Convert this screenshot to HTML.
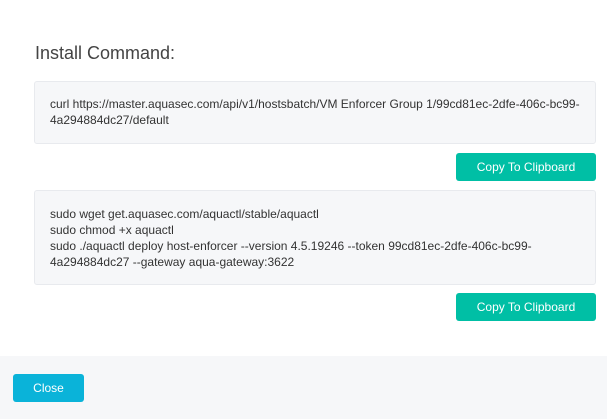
<!DOCTYPE html>
<html><head><style>
body{margin:0;width:607px;height:419px;background:#fff;font-family:"Liberation Sans",sans-serif;position:relative;overflow:hidden}
.t{position:absolute;left:35px;top:43px;font-size:18px;color:#444;}
.box{position:absolute;left:34px;width:560px;background:#f6f7f9;border:1px solid #e8eaee;border-radius:3px;}
.txt{position:absolute;left:50px;font-size:12px;line-height:16px;color:#333;white-space:nowrap}
.btn{position:absolute;left:456px;width:140px;height:28px;background:#00bfa5;border-radius:3px;color:#fff;font-size:12px;text-align:center;line-height:28px}
.foot{position:absolute;left:0;top:356px;width:607px;height:63px;background:#f6f7f9}
.close{position:absolute;left:13px;top:374px;width:71px;height:28px;background:#0ab3d9;border-radius:3px;color:#fff;font-size:12px;text-align:center;line-height:28px}
</style></head><body>
<div class="t">Install Command:</div>
<div class="box" style="top:81px;height:61px"></div>
<div class="txt" style="top:96px">curl https://master.aquasec.com/api/v1/hostsbatch/VM Enforcer Group 1/99cd81ec-2dfe-406c-bc99-<br>4a294884dc27/default</div>
<div class="btn" style="top:153px">Copy To Clipboard</div>
<div class="box" style="top:190px;height:93px"></div>
<div class="txt" style="top:206px">sudo wget get.aquasec.com/aquactl/stable/aquactl<br>sudo chmod +x aquactl<br>sudo ./aquactl deploy host-enforcer --version 4.5.19246 --token 99cd81ec-2dfe-406c-bc99-<br>4a294884dc27 --gateway aqua-gateway:3622</div>
<div class="btn" style="top:293px">Copy To Clipboard</div>
<div class="foot"></div>
<div class="close">Close</div>
</body></html>
